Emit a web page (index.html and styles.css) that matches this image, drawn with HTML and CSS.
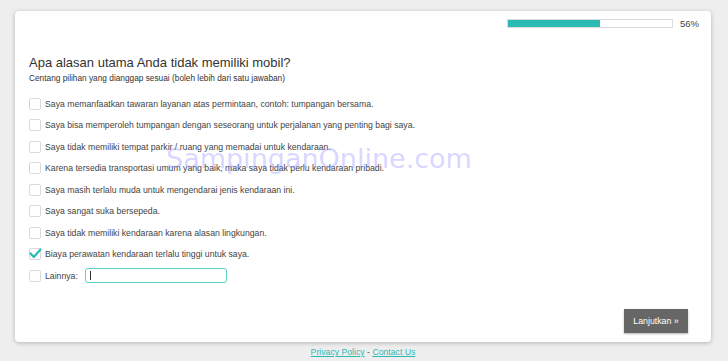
FILE: index.html
```html
<!DOCTYPE html>
<html lang="id">
<head>
  <meta charset="UTF-8" />
  <title>Survei</title>
  <link rel="stylesheet" href="styles.css">
</head>
<body>

  <!-- Survey card -->
  <div class="card">
    <div class="progress-row">
      <div class="progress"><div class="progress-fill" style="width: 56%"></div></div>
      <span class="progress-text">56%</span>
    </div>

    <h2 class="question">Apa alasan utama Anda tidak memiliki mobil?</h2>
    <p class="hint">Centang pilihan yang dianggap sesuai (boleh lebih dari satu jawaban)</p>

    <ul class="options">
      <li class="option"><span class="box"></span>Saya memanfaatkan tawaran layanan atas permintaan, contoh: tumpangan bersama.</li>
      <li class="option"><span class="box"></span>Saya bisa memperoleh tumpangan dengan seseorang untuk perjalanan yang penting bagi saya.</li>
      <li class="option"><span class="box"></span>Saya tidak memiliki tempat parkir / ruang yang memadai untuk kendaraan.</li>
      <li class="option"><span class="box"></span>Karena tersedia transportasi umum yang baik, maka saya tidak perlu kendaraan pribadi.</li>
      <li class="option"><span class="box"></span>Saya masih terlalu muda untuk mengendarai jenis kendaraan ini.</li>
      <li class="option"><span class="box"></span>Saya sangat suka bersepeda.</li>
      <li class="option"><span class="box"></span>Saya tidak memiliki kendaraan karena alasan lingkungan.</li>
      <li class="option">
        <span class="box checked">
          <svg width="13" height="11" viewBox="0 0 13 11"><path d="M1.5 5.5 L4.8 9 L11.5 1.5" fill="none" stroke="#2bbbb0" stroke-width="2.2" stroke-linecap="round" stroke-linejoin="round"/></svg>
        </span>Biaya perawatan kendaraan terlalu tinggi untuk saya.
      </li>
      <li class="option"><span class="box"></span>Lainnya:<span class="other-input"><span class="caret"></span></span></li>
    </ul>

    <div class="actions">
      <button class="next-btn">Lanjutkan »</button>
    </div>
  </div>

  <div class="footer">
    <a href="#">Privacy Policy</a> - <a href="#">Contact Us</a>
  </div>

  <!-- watermark -->
  <div class="watermark">SampinganOnline.com</div>

</body>
</html>
```

FILE: styles.css
```css
* { box-sizing: border-box; }

body {
  margin: 0;
  padding: 11px 17px 0 15px;
  background-color: #eeeeee;
  font-family: 'Liberation Sans', Arial, sans-serif;
  color: #333;
  position: relative;
  height: 361px;
  overflow: hidden;
}

.card {
  background-color: white;
  border-radius: 4px;
  box-shadow: 0 1px 4px rgba(0, 0, 0, 0.25);
  height: 331px;
  padding: 8px 12px 0 14px;
  display: flex;
  flex-direction: column;
}

.progress-row {
  display: flex;
  justify-content: flex-end;
  align-items: center;
  height: 9px;
}

.progress {
  width: 166px;
  height: 9px;
  border: 1px solid #dcdcdc;
  background-color: white;
}

.progress-fill {
  height: 100%;
  background-color: #2bbbb4;
}

.progress-text {
  font-size: 9.5px;
  color: #444;
  margin-left: 7px;
}

.question {
  font-size: 13px;
  font-weight: normal;
  color: #333;
  margin: 27px 0 0 0;
  line-height: 16px;
}

.hint {
  font-size: 8.3px;
  color: #333;
  margin: 1px 0 0 0;
  line-height: 12px;
}

.options {
  list-style: none;
  margin: 9px 0 0 0;
  padding: 0;
}

.option {
  display: flex;
  align-items: center;
  height: 21.5px;
  font-size: 8.7px;
  color: #444;
}

.box {
  width: 12px;
  height: 12px;
  border: 1px solid #dadada;
  border-radius: 2px;
  margin-right: 4px;
  flex-shrink: 0;
  display: flex;
  align-items: center;
  justify-content: center;
}

.box.checked svg {
  margin-left: 1px;
  margin-top: -1px;
  flex-shrink: 0;
}

.other-input {
  display: block;
  width: 142px;
  height: 15px;
  border: 1px solid #5ccfc6;
  border-radius: 3px;
  margin-left: 7px;
  padding: 2px 4px;
}

.caret {
  display: block;
  width: 1px;
  height: 9px;
  background-color: #333;
}

.actions {
  margin-top: auto;
  display: flex;
  justify-content: flex-end;
  padding: 0 11px 9px 0;
}

.next-btn {
  background-color: #666;
  color: white;
  border: none;
  font-family: 'Liberation Sans', Arial, sans-serif;
  font-size: 8.8px;
  width: 64px;
  height: 24px;
  box-shadow: 0 1px 2px rgba(0, 0, 0, 0.3);
  cursor: pointer;
}

.footer {
  text-align: center;
  font-size: 8.7px;
  color: #555;
  margin-top: 5px;
}

.footer a {
  color: #2bbbb4;
}

.watermark {
  position: absolute;
  left: 166px;
  top: 143px;
  font-family: 'DejaVu Sans', sans-serif;
  font-size: 27px;
  color: rgba(140, 140, 255, 0.35);
  pointer-events: none;
}
```
